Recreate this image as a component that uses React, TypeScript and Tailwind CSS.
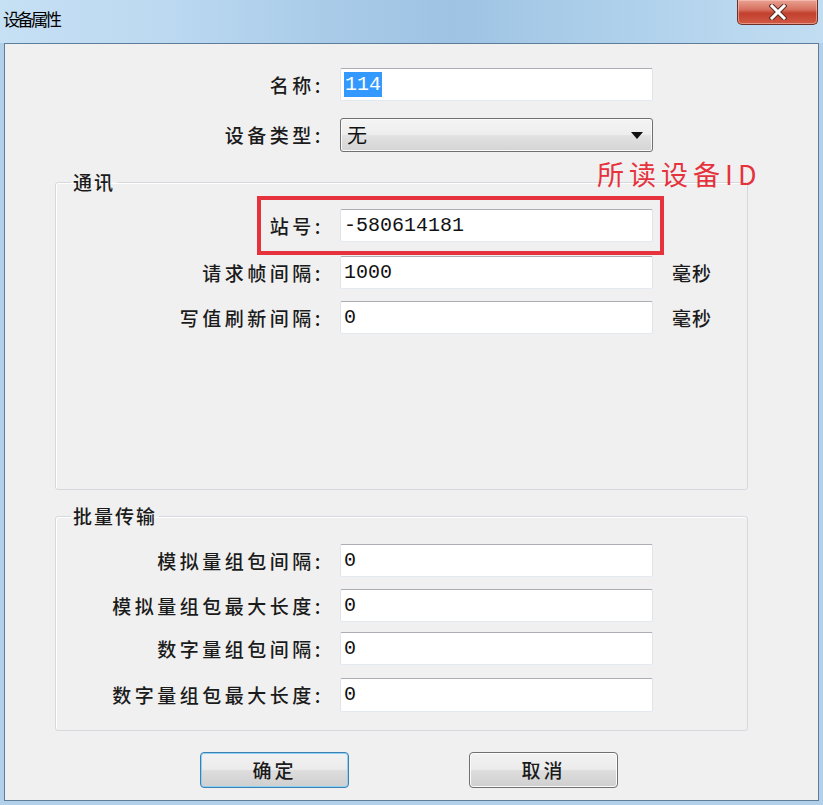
const cjk = "font-['Noto_Sans_CJK_SC','Noto_Sans',sans-serif]";
const mono = "font-['Liberation_Mono','DejaVu_Sans_Mono',monospace]";

const labelBase = `${cjk} font-medium text-[19px] leading-[22px] text-[#1b1b1b] shrink-0`;
const labelText = `${labelBase} tracking-[3.5px] text-right`;

function TextBox({ value, highlight = false, tall = false }: { value: string; highlight?: boolean; tall?: boolean }) {
  return (
    <div
      className={`${tall ? "h-[34px]" : "h-[33px]"} w-[313px] shrink-0 flex items-center pl-[3px] bg-white rounded-[2px] border border-[#e2e3ea] border-t-[#abadb3] border-b-[#e3e9ef] ${mono} text-[20px] text-[#111]`}
    >
      {highlight ? <span className="bg-[#3399ff] text-white px-[1px] leading-[25px]">{value}</span> : <span>{value}</span>}
    </div>
  );
}

function Row({
  label,
  value,
  labelW,
  unit,
  tall,
  highlight,
  className = "",
}: {
  label: string;
  value: string;
  labelW: string;
  unit?: string;
  tall?: boolean;
  highlight?: boolean;
  className?: string;
}) {
  return (
    <div className={`flex items-center ${className}`}>
      <div className={`${labelText} ${labelW} mr-[16px]`}>{label}</div>
      <TextBox value={value} tall={tall} highlight={highlight} />
      {unit && <div className={`${labelBase} tracking-[1px] ml-[19px]`}>{unit}</div>}
    </div>
  );
}

function Group({ title, className, children }: { title: string; className: string; children: React.ReactNode }) {
  return (
    <fieldset className={`ml-[50px] w-[693px] border border-[#d5d9de] rounded-[3px] shadow-[inset_1px_1px_0_#ffffff] ${className}`}>
      <legend className={`${labelBase} tracking-[2px] ml-[15px] px-[2px]`}>{title}</legend>
      {children}
    </fieldset>
  );
}

function Button({ text, primary = false }: { text: string; primary?: boolean }) {
  return (
    <div
      className={`w-[149px] h-[36px] flex items-center justify-center rounded-[4px] border ${
        primary ? "border-[#3c7fb1] shadow-[inset_0_0_0_1px_#8fd0f3]" : "border-[#707070] shadow-[inset_0_0_0_1px_#fcfcfc]"
      } bg-[linear-gradient(180deg,#f2f2f2_0%,#ebebeb_48%,#dddddd_52%,#cfcfcf_100%)] ${cjk} font-medium text-[19px] tracking-[3px] text-[#1b1b1b]`}
    >
      {text}
    </div>
  );
}

export default function App() {
  return (
    <div className="relative w-[823px] h-[805px] flex flex-col bg-[#b3d0ea] overflow-hidden">
      {/* Title bar */}
      <div className="h-[43px] shrink-0 flex justify-between bg-[linear-gradient(90deg,#c6e0f4_0%,#bcd9f1_20%,#a9cbe8_40%,#9ec3e3_55%,#aacde9_70%,#c2ddf2_100%)]">
        <div className={`${cjk} pl-[3px] pt-[7px] text-[17px] tracking-[-3px] leading-[24px] text-black`}>设备属性</div>
        <div className="mr-[5px] w-[81px] h-[25px] rounded-b-[5px] border border-t-0 border-[#6d3028] bg-[linear-gradient(180deg,#e9a293_0%,#d6705f_40%,#c2402e_55%,#d25a43_100%)] shadow-[inset_0_0_0_1px_rgba(255,210,200,0.5)] flex items-center justify-center">
          <svg width="18" height="16" viewBox="0 0 18 16">
            <path d="M3 2 L15 14 M15 2 L3 14" stroke="#5a2a22" strokeWidth="5" strokeLinecap="square" />
            <path d="M3 2 L15 14 M15 2 L3 14" stroke="#ffffff" strokeWidth="3" strokeLinecap="square" />
          </svg>
        </div>
      </div>

      {/* Client area */}
      <div className="flex-1 px-[4px] pb-[4px]">
        <div className="h-full border border-[#5e7d99] bg-[#f0f0f0] pt-[24px]">
          <Row label="名称:" value="114" labelW="w-[319px]" highlight />
          <div className="flex items-center mt-[17px]">
            <div className={`${labelText} w-[319px] mr-[16px]`}>设备类型:</div>
            <div className="h-[34px] w-[313px] flex items-center justify-between pl-[6px] pr-[9px] rounded-[3px] border border-[#707070] bg-[linear-gradient(180deg,#f4f4f4_0%,#eeeeee_48%,#e2e2e2_52%,#d4d4d4_100%)] shadow-[inset_0_0_0_1px_#fafafa]">
              <span className={`${cjk} text-[20px] text-[#111]`}>无</span>
              <svg width="12" height="7" viewBox="0 0 12 7">
                <path d="M0 0 H12 L6 7 Z" fill="#111" />
              </svg>
            </div>
          </div>

          <Group title="通讯" className="mt-[19px] h-[319px] pt-[3px]">
            <div className="ml-[201px] w-[407px] flex items-center border-4 border-[#e5323c] pl-[6px] pt-[9px] pb-[9px]">
              <div className={`${labelText} w-[57px] mr-[16px]`}>站号:</div>
              <TextBox value="-580614181" />
            </div>
            <Row label="请求帧间隔:" value="1000" labelW="w-[268px]" unit="毫秒" className="mt-[1px]" />
            <Row label="写值刷新间隔:" value="0" labelW="w-[268px]" unit="毫秒" className="mt-[12px]" />
          </Group>

          <Group title="批量传输" className="mt-[15px] h-[226px] pt-[17px]">
            <Row label="模拟量组包间隔:" value="0" labelW="w-[268px]" />
            <Row label="模拟量组包最大长度:" value="0" labelW="w-[268px]" className="mt-[12px]" />
            <Row label="数字量组包间隔:" value="0" labelW="w-[268px]" className="mt-[10px]" />
            <Row label="数字量组包最大长度:" value="0" labelW="w-[268px]" tall className="mt-[13px]" />
          </Group>

          <div className="flex gap-[120px] pl-[195px] mt-[21px]">
            <Button text="确定" primary />
            <Button text="取消" />
          </div>
        </div>
      </div>

      {/* Annotation drawn over the dialog */}
      <div className={`absolute left-[597px] top-[158px] ${cjk} text-[27px] leading-[32px] tracking-[5px] text-[#e5323c]`}>
        所读设备ID
      </div>
    </div>
  );
}
